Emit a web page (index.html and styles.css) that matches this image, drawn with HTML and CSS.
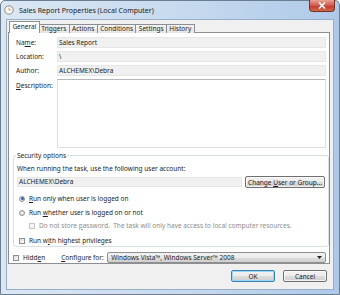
FILE: index.html
```html
<!DOCTYPE html>
<html lang="en">
<head>
    <meta charset="UTF-8">
    <title>Sales Report Properties</title>
    <link rel="stylesheet" href="styles.css">
</head>
<body>
    <div class="window">
        <div class="titlebar">
            <svg class="app-icon" width="10" height="10" viewBox="0 0 10 10">
                <circle cx="5" cy="5" r="4.3" fill="#e9e9e9" stroke="#8a8a8a" stroke-width="0.9"/>
                <circle cx="5" cy="5" r="3" fill="#fbfbfb"/>
                <path d="M5 2.6 V5 H6.8" fill="none" stroke="#d08a1e" stroke-width="0.9"/>
            </svg>
            <span class="title">Sales Report Properties (Local Computer)</span>
            <div class="close">
                <svg width="8" height="7" viewBox="0 0 8 7">
                    <path d="M1 0.5 L7 6.5 M7 0.5 L1 6.5" stroke="#fff" stroke-width="1.6"/>
                </svg>
            </div>
        </div>
        <div class="client">
            <div class="tabs">
                <div class="tab active">General</div>
                <div class="tab">Triggers</div>
                <div class="tab">Actions</div>
                <div class="tab">Conditions</div>
                <div class="tab">Settings</div>
                <div class="tab">History</div>
            </div>
            <div class="panel">
                <div class="field-row">
                    <span class="label">Na<u>m</u>e:</span>
                    <div class="field readonly">Sales Report</div>
                </div>
                <div class="field-row">
                    <span class="label">Location:</span>
                    <div class="field readonly">\</div>
                </div>
                <div class="field-row">
                    <span class="label">Author:</span>
                    <div class="field readonly">ALCHEMEX\Debra</div>
                </div>
                <div class="field-row desc-row">
                    <span class="label"><u>D</u>escription:</span>
                    <div class="field textarea"></div>
                </div>

                <fieldset class="group">
                    <legend>Security options</legend>
                    <div class="group-text">When running the task, use the following user account:</div>
                    <div class="account-row">
                        <div class="field readonly account">ALCHEMEX\Debra</div>
                        <div class="btn"><span>Change <u>U</u>ser or Group...</span></div>
                    </div>
                    <div class="option radio-row first">
                        <span class="radio checked"></span>
                        <span><u>R</u>un only when user is logged on</span>
                    </div>
                    <div class="option radio-row">
                        <span class="radio"></span>
                        <span>Run <u>w</u>hether user is logged on or not</span>
                    </div>
                    <div class="option sub-option disabled">
                        <span class="check"></span>
                        <span>Do not store <u>p</u>assword.&nbsp; The task will only have access to local computer resources.</span>
                    </div>
                    <div class="option priv-row">
                        <span class="check"></span>
                        <span>Run w<u>i</u>th highest privileges</span>
                    </div>
                </fieldset>

                <div class="bottom-row">
                    <div class="option">
                        <span class="check"></span>
                        <span>Hidd<u>e</u>n</span>
                    </div>
                    <span class="configure-label"><u>C</u>onfigure for:</span>
                    <div class="combo">
                        <span>Windows Vista™, Windows Server™ 2008</span>
                        <svg width="5" height="3" viewBox="0 0 5 3"><path d="M0 0 H5 L2.5 3 Z" fill="#222"/></svg>
                    </div>
                </div>
            </div>
            <div class="buttons">
                <div class="btn dialog-btn default"><span>OK</span></div>
                <div class="btn dialog-btn"><span>Cancel</span></div>
            </div>
        </div>
    </div>
</body>
</html>
```

FILE: styles.css
```css
body {
    margin: 0;
    background: #fff;
    font-family: 'Noto Sans', 'Open Sans', sans-serif;
    font-size: 6.5px;
    color: #1c1c1c;
}
u {
    text-decoration-thickness: 0.5px;
    text-underline-offset: 1px;
}
.window {
    width: 340px;
    height: 295px;
    box-sizing: border-box;
    border: 1px solid #6b7d90;
    border-radius: 5px 5px 0 0;
    background: linear-gradient(to right, #dce7f3, #c4d8ee 60%, #aec9e8);
    padding: 0 5px 4px 5px;
    display: flex;
    flex-direction: column;
}
.titlebar {
    height: 18px;
    display: flex;
    align-items: center;
}
.app-icon {
    margin-left: -2px;
    margin-right: 5px;
}
.title {
    font-size: 7px;
    color: #1a1a1a;
    flex: 1;
}
.close {
    align-self: flex-start;
    margin-top: -1px;
    margin-right: -1px;
    width: 26px;
    height: 12px;
    box-sizing: border-box;
    border: 1px solid #7a3028;
    border-top: none;
    border-radius: 0 0 4px 4px;
    background: linear-gradient(#e8a193, #d0574a 50%, #c13a2c 55%, #d26a4e);
    display: flex;
    align-items: center;
    justify-content: center;
}
.client {
    flex: 1;
    background: #f0f0f0;
    border: 1px solid #98adc6;
    padding: 2px 3px 6px 1px;
    display: flex;
    flex-direction: column;
}
.tabs {
    display: flex;
    align-items: flex-end;
    height: 11px;
    padding-left: 1px;
    position: relative;
    z-index: 1;
    margin-bottom: -1px;
}
.tab {
    height: 9px;
    box-sizing: border-box;
    border: 1px solid #8c8e94;
    border-bottom: none;
    margin-left: -1px;
    padding: 0 2.4px;
    line-height: 8px;
    background: linear-gradient(#f3f3f3, #e5e5e5);
}
.tab:first-child {
    margin-left: 0;
}
.tab.active {
    height: 12px;
    line-height: 10px;
    background: #fff;
    margin-right: -1px;
    position: relative;
    z-index: 2;
}
.panel {
    height: 232px;
    box-sizing: border-box;
    border: 1px solid #8c8e94;
    background: #fff;
    padding: 4px 3px 0 4px;
    display: flex;
    flex-direction: column;
}
.field-row {
    display: flex;
    align-items: center;
    padding-left: 3px;
    margin-bottom: 3px;
}
.label {
    width: 41px;
    flex-shrink: 0;
}
.field {
    flex: 1;
    height: 11px;
    box-sizing: border-box;
    line-height: 9px;
    padding: 0 1px;
}
.readonly {
    background: #f0f0f0;
    border: 1px solid #e6e6e6;
}
.desc-row {
    align-items: flex-start;
    margin-bottom: 0;
}
.desc-row .label {
    margin-top: 2px;
}
.textarea {
    height: 69px;
    background: #fff;
    border: 1px solid #dadde2;
    border-top-color: #b4b7bd;
}
.group {
    margin: 3px 0 0 0;
    padding: 2px 3px 1px 3px;
    border: 1px solid #d5dfe5;
    border-radius: 3px;
}
.group legend {
    padding: 0 1px;
    margin-left: -1px;
    line-height: 9px;
}
.group-text {
    line-height: 9px;
    margin-top: 2px;
}
.account-row {
    display: flex;
    align-items: center;
    margin-top: 3px;
}
.account {
    flex: none;
    width: 225px;
    height: 10px;
    line-height: 8px;
}
.btn {
    height: 12px;
    box-sizing: border-box;
    border: 1px solid #707070;
    border-radius: 2px;
    background: linear-gradient(#f2f2f2, #ebebeb 50%, #dddddd 51%, #cfcfcf);
    display: flex;
    align-items: center;
    justify-content: center;
    box-shadow: inset 0 0 0 1px rgba(255, 255, 255, 0.7);
}
.account-row .btn {
    margin-left: 3px;
    width: 80px;
}
.option {
    display: flex;
    align-items: center;
    height: 9px;
}
.radio-row.first {
    margin-top: 6px;
}
.radio-row {
    margin-top: 5px;
}
.radio {
    width: 6px;
    height: 6px;
    box-sizing: border-box;
    border-radius: 50%;
    border: 1px solid #8f8f8f;
    background: radial-gradient(#f4f4f4, #d9d9d9);
    margin: 0 4px 0 2px;
    display: flex;
    align-items: center;
    justify-content: center;
}
.radio.checked::after {
    content: "";
    width: 3px;
    height: 3px;
    border-radius: 50%;
    background: #2b66b8;
}
.check {
    width: 6px;
    height: 6px;
    box-sizing: border-box;
    border: 1px solid #8f8f8f;
    background: linear-gradient(135deg, #dcdcdc, #fafafa);
    margin: 0 4px 0 2px;
}
.sub-option {
    margin-top: 4px;
    padding-left: 10px;
}
.disabled {
    color: #8d8d8d;
}
.disabled .check {
    border-color: #c4c4c4;
    background: #f4f4f4;
}
.priv-row {
    margin-top: 6px;
}
.bottom-row {
    display: flex;
    align-items: center;
    margin-top: 5px;
}
.bottom-row .option .check {
    margin-left: 0;
}
.configure-label {
    margin-left: 16px;
    width: 46px;
}
.combo {
    flex: 1;
    height: 11px;
    box-sizing: border-box;
    border: 1px solid #8e8f8f;
    border-radius: 2px;
    background: linear-gradient(#f2f2f2, #ebebeb 50%, #dddddd 51%, #cfcfcf);
    display: flex;
    align-items: center;
    justify-content: space-between;
    padding: 0 3px 0 3px;
}
.buttons {
    display: flex;
    justify-content: flex-end;
    gap: 8px;
    margin-top: 6px;
    padding-right: 3px;
}
.dialog-btn {
    width: 44px;
}
.dialog-btn.default {
    border-color: #3c7fb1;
    box-shadow: inset 0 0 0 1px #9bd7f4;
}
```
